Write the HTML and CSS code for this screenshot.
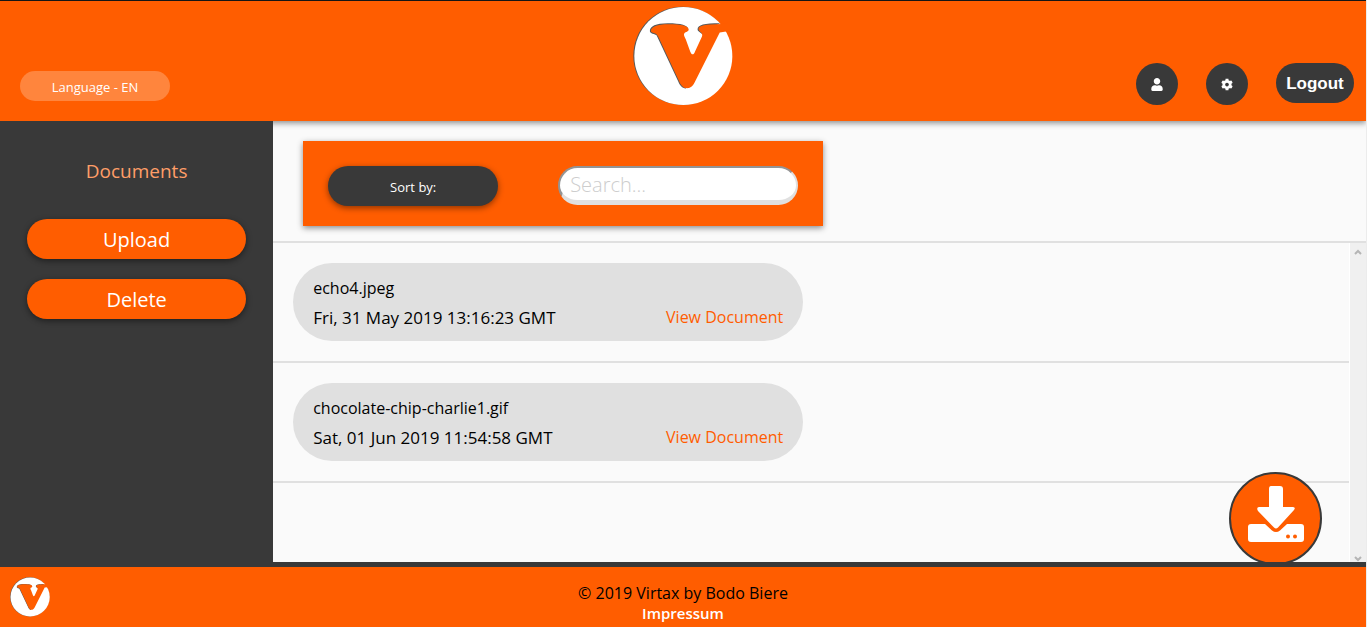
FILE: index.html
```
<!DOCTYPE html>
<html lang="en">
<head>
<meta charset="utf-8">
<title>Virtax – Documents</title>
<link rel="stylesheet" href="styles.css">
</head>
<body>
<svg class="defs" aria-hidden="true">
  <symbol id="logo" viewBox="39 17 302 302">
    <circle cx="188" cy="167" r="148" fill="#55595a"/>
    <circle cx="191" cy="168" r="148" fill="#fff"/>
    <path fill="#55595a" d="M90 92C90 78 108 69 144 69C184 69 206 75 206 88L110 105C97 100 90 100 90 92ZM234 87C234 74 254 69 302 69L246 101C243 95 234 95 234 87ZM108 101L122 106L200 266C188 267 180 256 176 246Z"/>
    <path fill="#ff5d00" d="M93 92C93 80 113 72 146 72C186 72 207 77 207 88C207 97 194 94 193 103C193 108 196 112 198 117L212 155C216 165 222 166 226 155L247 110C252 97 237 96 237 86C237 75 257 72 306 71L342 65V93L320 94L301 97L225 248C218 262 208 266 200 265C190 265 183 255 179 246L118 115C113 104 110 101 104 99C97 97 93 97 93 92Z"/>
  </symbol>
</svg>
<header class="header">
  <button class="language" type="button">Language - EN</button>
  <a class="brand" href="#" aria-label="Virtax home"><svg class="brand-logo"><use href="#logo"/></svg></a>
  <nav class="actions" aria-label="Account">
    <button class="round" type="button" aria-label="Profile">
      <svg class="icon" viewBox="0 0 448 512"><path fill="currentColor" d="M224 256c70.700 0 128-57.300 128-128S294.700 0 224 0 96 57.300 96 128s57.300 128 128 128zm89.600 32h-16.700c-22.200 10.200-46.900 16-72.900 16s-50.600-5.800-72.900-16h-16.700C60.200 288 0 348.200 0 422.400V464c0 26.500 21.500 48 48 48h352c26.500 0 48-21.500 48-48v-41.600c0-74.200-60.200-134.400-134.400-134.400z"/></svg>
    </button>
    <button class="round" type="button" aria-label="Settings">
      <svg class="icon" viewBox="0 0 512 512"><path fill="currentColor" d="M487.400 315.700l-42.600-24.600c4.300-23.200 4.300-47 0-70.200l42.600-24.600c4.900-2.800 7.100-8.600 5.500-14-11.100-35.600-30-67.800-54.700-94.600-3.800-4.100-10-5.100-14.800-2.300L380.800 110c-17.900-15.400-38.500-27.300-60.800-35.100V25.800c0-5.600-3.900-10.500-9.400-11.700-36.700-8.200-74.300-7.800-109.200 0-5.500 1.200-9.400 6.100-9.400 11.700V75c-22.200 7.900-42.800 19.800-60.800 35.100L88.700 85.500c-4.900-2.800-11-1.900-14.800 2.300-24.700 26.700-43.600 58.900-54.700 94.600-1.700 5.400.6 11.200 5.500 14L67.300 221c-4.300 23.200-4.300 47 0 70.200l-42.600 24.600c-4.900 2.800-7.100 8.600-5.500 14 11.100 35.600 30 67.800 54.700 94.600 3.800 4.100 10 5.100 14.800 2.300l42.600-24.600c17.900 15.400 38.500 27.300 60.800 35.100v49.200c0 5.600 3.900 10.500 9.400 11.700 36.700 8.200 74.300 7.800 109.200 0 5.500-1.200 9.400-6.100 9.400-11.700v-49.200c22.200-7.900 42.800-19.800 60.800-35.100l42.600 24.600c4.900 2.800 11 1.900 14.800-2.300 24.700-26.700 43.600-58.900 54.700-94.600 1.500-5.500-.7-11.300-5.600-14.100zM256 336c-44.100 0-80-35.900-80-80s35.900-80 80-80 80 35.900 80 80-35.900 80-80 80z"/></svg>
    </button>
    <button class="logout" type="button">Logout</button>
  </nav>
</header>
<div class="body">
  <aside class="sidebar">
    <h1 class="title">Documents</h1>
    <button class="side-button" type="button">Upload</button>
    <button class="side-button" type="button">Delete</button>
  </aside>
  <main class="main">
    <div class="toolbar">
      <form class="filter">
        <button class="sort" type="button">Sort by:</button>
        <input class="search" type="search" placeholder="Search..." aria-label="Search documents">
      </form>
    </div>
    <div class="scroller">
      <ul class="list">
        <li class="row">
          <article class="card">
            <div class="name">echo4.jpeg</div>
            <div class="meta"><time class="date">Fri, 31 May 2019 13:16:23 GMT</time><a class="view" href="#">View Document</a></div>
          </article>
        </li>
        <li class="row">
          <article class="card">
            <div class="name">chocolate-chip-charlie1.gif</div>
            <div class="meta"><time class="date">Sat, 01 Jun 2019 11:54:58 GMT</time><a class="view" href="#">View Document</a></div>
          </article>
        </li>
      </ul>
      <div class="track" aria-hidden="true">
        <svg class="arrow" viewBox="0 0 8 6"><path d="M1 5L4 2L7 5"/></svg>
        <svg class="arrow" viewBox="0 0 8 6"><path d="M1 1L4 4L7 1"/></svg>
      </div>
    </div>
    <button class="download" type="button" aria-label="Download">
      <svg class="download-icon" viewBox="0 0 56 56">
        <path fill="#fff" d="M3 38H17L24 44.500Q28 47.500 32 44.500L39 38H53Q56 38 56 41V53Q56 56 53 56H3Q0 56 0 53V41Q0 38 3 38Z"/>
        <path fill="#fff" stroke="#ff5d00" stroke-width="4" paint-order="stroke" d="M23 0H32Q35 0 35 3V21H45Q48 21.500 46 24L30 41.500Q28 43.500 26 41.500L10 25Q8 21.500 11 21H21V3Q21 0 23 0Z"/>
        <circle cx="40" cy="50.500" r="2" fill="#ff5d00"/><circle cx="47" cy="50.500" r="2" fill="#ff5d00"/>
      </svg>
    </button>
  </main>
</div>
<footer class="footer">
  <svg class="footer-logo" aria-hidden="true"><use href="#logo"/></svg>
  <div class="legal">
    <div>© 2019 Virtax by Bodo Biere</div>
    <a class="impressum" href="#">Impressum</a>
  </div>
</footer>
</body>
</html>
```
FILE: styles.css
```
* { box-sizing: border-box; }

body {
  margin: 0;
  min-height: 100vh;
  display: flex;
  flex-direction: column;
  border-right: 1px solid #ececec;
  background: #fafafa;
  color: #000;
  font: 16px/20px "Open Sans", "Noto Sans", sans-serif;
}

button, input { font-family: inherit; }
button { border: 0; padding: 0; cursor: pointer; }
a { text-decoration: none; }
.defs { position: absolute; width: 0; height: 0; }

.header {
  position: relative;
  z-index: 1;
  height: 121px;
  display: grid;
  grid-template-columns: 1fr auto 1fr;
  background: #ff5d00;
  border-top: 1px solid #151515;
  box-shadow: 0 2px 6px rgba(0, 0, 0, .45);
}

.language {
  align-self: end;
  width: 150px;
  height: 30px;
  margin: 0 20px 20px;
  padding-top: 2px;
  border-radius: 15px;
  background: #ff853d;
  color: #fff;
  font-size: 13px;
}

.brand { padding-top: 5px; }
.brand-logo { display: block; width: 100px; height: 100px; }

.actions {
  display: flex;
  justify-content: flex-end;
  gap: 28px;
  padding: 62px 12px 0 0;
}

.round {
  display: grid;
  place-items: center;
  width: 42px;
  height: 42px;
  border-radius: 50%;
  background: #393939;
  color: #fff;
}

.icon { width: 12px; height: 13px; }

.logout {
  width: 78px;
  height: 40px;
  padding-top: 2px;
  border-radius: 20px;
  background: #393939;
  color: #fff;
  font: bold 17px "Liberation Sans", Arial, sans-serif;
}

.body { flex: 1; display: flex; border-bottom: 5px solid #393939; }

.sidebar {
  position: relative;
  z-index: 2;
  width: 20%;
  display: flex;
  flex-direction: column;
  gap: 20px;
  padding: 36px 27px 0;
  background: #393939;
}

.title {
  margin: 0 0 14px;
  color: #ff9e68;
  font-size: 19px;
  font-weight: 500;
  line-height: 28px;
  text-align: center;
}

.side-button {
  height: 40px;
  border-radius: 20px;
  background: #ff5d00;
  box-shadow: 0 2px 6px rgba(0, 0, 0, .45);
  color: #fff;
  font-size: 20px;
}

.main {
  position: relative;
  flex: 1;
  display: flex;
  flex-direction: column;
  overflow: hidden;
}

.toolbar { padding: 20px 30px 15px; border-bottom: 2px solid #e0e0e0; }

.filter {
  display: flex;
  justify-content: space-between;
  max-width: 520px;
  padding: 25px 25px 20px;
  background: #ff5d00;
  box-shadow: 0 2px 6px rgba(0, 0, 0, .45);
}

.sort {
  width: 170px;
  height: 40px;
  padding-top: 2px;
  border-radius: 20px;
  background: #393939;
  box-shadow: 0 2px 6px rgba(0, 0, 0, .45);
  color: #fff;
  font-size: 13px;
}

.search {
  width: 240px;
  height: 39px;
  padding: 0 10px;
  border: 2px solid;
  border-color: #949494 #e0e0e0 #e0e0e0 #949494;
  border-bottom-width: 5px;
  border-radius: 20px;
  background: #fff;
  font-size: 20px;
  font-weight: 300;
}

.search::placeholder { color: #cdcdcd; }

.scroller { flex: 1; display: flex; }
.list { flex: 1; margin: 0; padding: 0; list-style: none; }
.row { padding: 20px; border-bottom: 2px solid #e0e0e0; }

.card {
  max-width: 510px;
  padding: 11px 20px 9px;
  border-radius: 39px;
  background: #e0e0e0;
  line-height: 29px;
}

.meta { display: flex; justify-content: space-between; }
.date { font-size: 17px; }
.view { color: #ff5d00; }

.track {
  width: 17px;
  display: flex;
  flex-direction: column;
  align-items: center;
  justify-content: space-between;
  padding-top: 6px;
  border-left: 1px solid #fff;
  background: #f0f0f0;
}

.arrow {
  width: 8px;
  height: 6px;
  fill: none;
  stroke: #b5b5b5;
  stroke-width: 2;
}

.download {
  position: absolute;
  right: 44px;
  bottom: -3px;
  display: grid;
  place-items: center;
  width: 93px;
  height: 93px;
  border: 2px solid #393939;
  border-radius: 50%;
  background: #ff5d00;
}

.download-icon { width: 56px; height: 56px; margin-bottom: 10px; overflow: visible; }

.footer {
  display: grid;
  grid-template-columns: 1fr auto 1fr;
  height: 60px;
  padding: 10px 10px 0;
  background: #ff5d00;
}

.footer-logo { width: 40px; height: 40px; }
.legal { padding-top: 6px; text-align: center; }
.impressum { display: block; color: #fff; font-size: 15px; font-weight: 600; }
```
